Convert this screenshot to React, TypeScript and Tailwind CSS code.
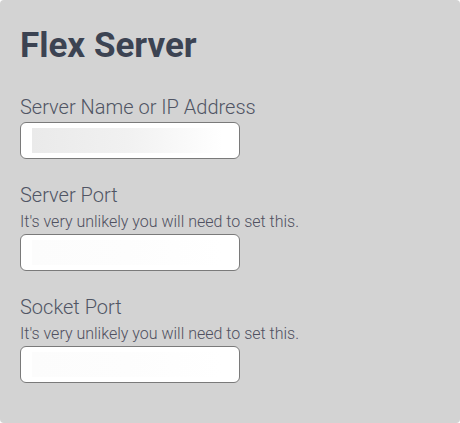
export default function App() {
  const fields = [
    { label: "Server Name or IP Address", help: null, blur: "from-[#eaeaea] via-[#f1f1f1] to-white" },
    { label: "Server Port", help: "It's very unlikely you will need to set this.", blur: "from-[#fcfcfc] via-[#fdfdfd] to-white" },
    { label: "Socket Port", help: "It's very unlikely you will need to set this.", blur: "from-[#fcfcfc] via-[#fdfdfd] to-white" },
  ];
  return (
    <div className="w-[460px] h-[423px] bg-white" style={{ fontFamily: "Roboto, 'Noto Sans', sans-serif" }}>
      <div className="w-full h-full rounded-[4px] bg-[#d3d3d3] pl-[20px] pt-[25px]">
        <h1 className="text-[35px] leading-[41px] font-bold text-[#3c4352]">Flex Server</h1>
        <div className="mt-[30px] flex flex-col gap-[25px]">
          {fields.map((f) => (
            <div key={f.label} className="flex flex-col">
              <label className="text-[20px] leading-[23px] font-light text-[#505564]">{f.label}</label>
              {f.help && (
                <div className="text-[16px] leading-[19px] font-light text-[#4f5060] mt-[5px]">{f.help}</div>
              )}
              <div className="relative mt-[3px] w-[220px] h-[37px]">
                <input
                  type="text"
                  className="w-full h-full bg-white border border-[#7a7a7a] rounded-[6px] outline-none"
                />
                <div className={`pointer-events-none absolute left-[12px] top-[6px] w-[190px] h-[25px] bg-gradient-to-r ${f.blur}`} />
              </div>
            </div>
          ))}
        </div>
      </div>
    </div>
  );
}
